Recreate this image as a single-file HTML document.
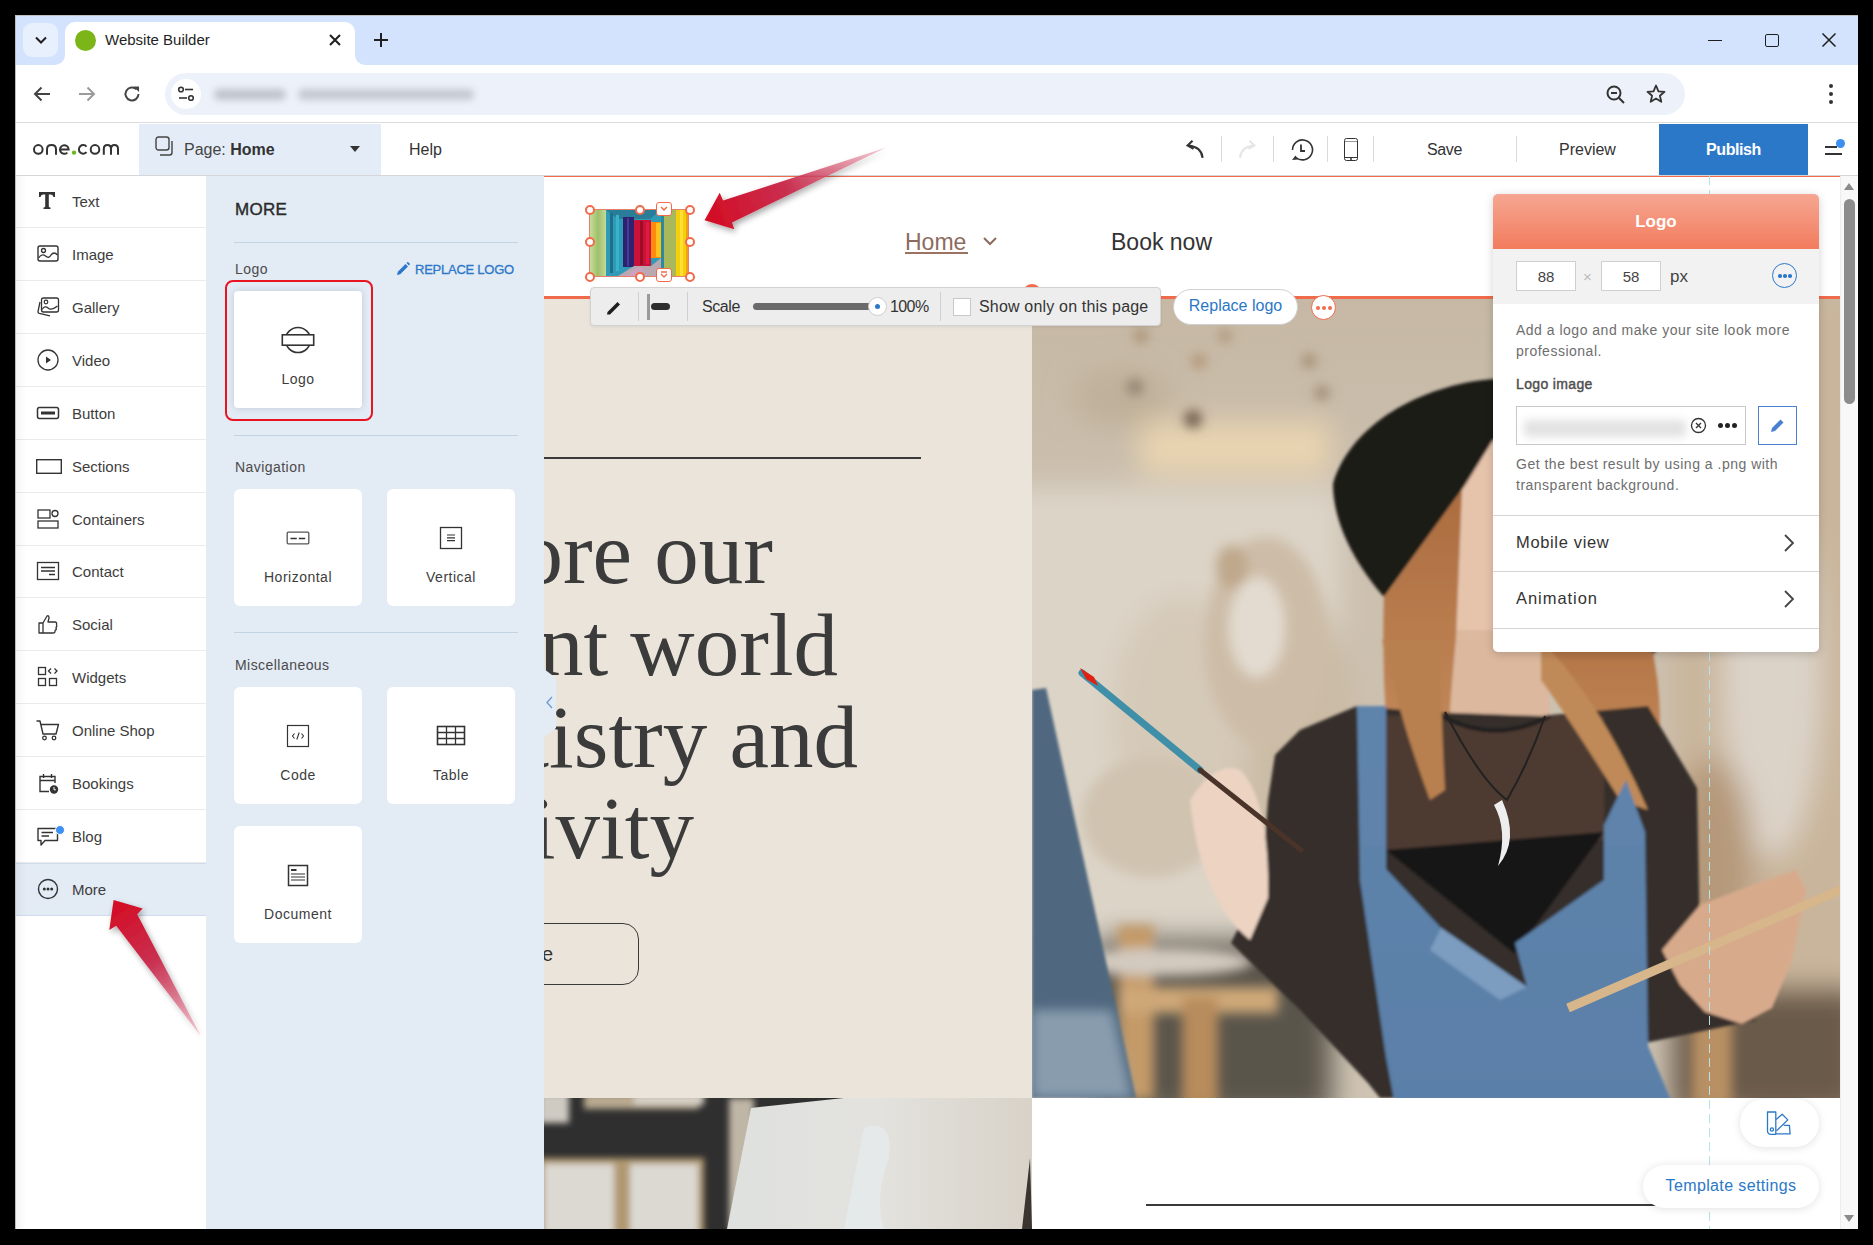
<!DOCTYPE html>
<html><head><meta charset="utf-8">
<style>
*{box-sizing:border-box;margin:0;padding:0}
html,body{width:1873px;height:1245px;overflow:hidden;background:#000;font-family:"Liberation Sans",sans-serif;color:#333}
div,span,svg{position:absolute}
.t{white-space:nowrap;line-height:1}
</style></head>
<body>
<!-- window -->
<div style="left:15px;top:15px;width:1843px;height:1214px;background:#fff;overflow:hidden;border-left:1px solid #bfbfbf;border-top:1px solid #bfbfbf"></div>
<!-- tab strip -->
<div style="left:16px;top:16px;width:1842px;height:49px;background:#d3e3fd"></div>
<!-- active tab -->
<div style="left:65px;top:22px;width:290px;height:43px;background:#fff;border-radius:10px 10px 0 0"></div>
<div style="left:55px;top:55px;width:10px;height:10px;background:#fff"></div>
<div style="left:45px;top:45px;width:20px;height:20px;background:#d3e3fd;border-radius:0 0 10px 0"></div>
<div style="left:355px;top:55px;width:10px;height:10px;background:#fff"></div>
<div style="left:355px;top:45px;width:20px;height:20px;background:#d3e3fd;border-radius:0 0 0 10px"></div>
<div style="left:23px;top:23px;width:35px;height:34px;border-radius:9px;background:#e8f0fe"></div>
<svg style="left:33px;top:33px" width="16" height="14" viewBox="0 0 16 14"><path d="M3 4.5 L8 9.5 L13 4.5" fill="none" stroke="#1f1f1f" stroke-width="2"/></svg>
<div style="left:75px;top:30px;width:21px;height:21px;border-radius:50%;background:#7cb518"></div>
<span class="t" style="left:105px;top:32px;font-size:15px;color:#1f1f1f">Website Builder</span>
<svg style="left:327px;top:32px" width="16" height="16" viewBox="0 0 16 16"><path d="M3 3 L13 13 M13 3 L3 13" stroke="#1f1f1f" stroke-width="2"/></svg>
<svg style="left:372px;top:31px" width="18" height="18" viewBox="0 0 18 18"><path d="M9 2 V16 M2 9 H16" stroke="#1f1f1f" stroke-width="2"/></svg>
<!-- window controls -->
<div style="left:1708px;top:39.5px;width:14px;height:1px;background:#1f1f1f"></div>
<div style="left:1765px;top:34px;width:14px;height:13px;border:1.5px solid #1f1f1f;border-radius:2px"></div>
<svg style="left:1821px;top:32px" width="16" height="16" viewBox="0 0 16 16"><path d="M1.5 1.5 L14.5 14.5 M14.5 1.5 L1.5 14.5" stroke="#1f1f1f" stroke-width="1.5"/></svg>
<!-- toolbar -->
<div style="left:16px;top:65px;width:1842px;height:58px;background:#fff;border-bottom:1px solid #dcdcdc"></div>
<svg style="left:32px;top:84px" width="20" height="20" viewBox="0 0 20 20"><path d="M18 10 H3 M9.5 3.5 L3 10 L9.5 16.5" fill="none" stroke="#444" stroke-width="2"/></svg>
<svg style="left:77px;top:84px" width="20" height="20" viewBox="0 0 20 20"><path d="M2 10 H17 M10.5 3.5 L17 10 L10.5 16.5" fill="none" stroke="#9a9a9a" stroke-width="2"/></svg>
<svg style="left:122px;top:84px" width="20" height="20" viewBox="0 0 20 20"><path d="M16.5 10 A6.5 6.5 0 1 1 14.6 5.4" fill="none" stroke="#444" stroke-width="2"/><path d="M11.5 2.5 H17 V8 Z" fill="#444"/></svg>
<div style="left:165px;top:73px;width:1520px;height:42px;border-radius:21px;background:#edf2fa"></div>
<div style="left:171px;top:79px;width:30px;height:30px;border-radius:50%;background:#fff"></div>
<svg style="left:176px;top:84px" width="20" height="20" viewBox="0 0 20 20"><circle cx="5" cy="5.5" r="2.3" fill="none" stroke="#333" stroke-width="1.6"/><path d="M9 5.5 H17" stroke="#333" stroke-width="1.6"/><path d="M3 14 H11" stroke="#333" stroke-width="1.6"/><circle cx="15" cy="14" r="2.3" fill="none" stroke="#333" stroke-width="1.6"/></svg>
<div style="left:214px;top:89px;width:72px;height:11px;border-radius:5px;background:#bfc3cb;filter:blur(3.5px)"></div><div style="left:298px;top:89px;width:176px;height:11px;border-radius:5px;background:#c4c8d0;filter:blur(3.5px)"></div>
<svg style="left:1605px;top:84px" width="22" height="22" viewBox="0 0 22 22"><circle cx="9" cy="9" r="6.5" fill="none" stroke="#333" stroke-width="2"/><path d="M6 9 H12 M13.8 13.8 L19 19" stroke="#333" stroke-width="2"/></svg>
<svg style="left:1645px;top:83px" width="22" height="22" viewBox="0 0 22 22"><path d="M11 2.5 L13.5 8.3 L19.5 8.8 L14.9 12.8 L16.3 18.8 L11 15.6 L5.7 18.8 L7.1 12.8 L2.5 8.8 L8.5 8.3 Z" fill="none" stroke="#333" stroke-width="1.8" stroke-linejoin="round"/></svg>
<svg style="left:1826px;top:83px" width="10" height="22" viewBox="0 0 10 22"><circle cx="5" cy="3" r="2" fill="#333"/><circle cx="5" cy="11" r="2" fill="#333"/><circle cx="5" cy="19" r="2" fill="#333"/></svg>

<!-- EDITOR -->
<div style="left:16px;top:124px;width:1842px;height:52px;background:#fff;border-bottom:1px solid #d6d6d6"></div>
<svg style="left:30px;top:140px" width="95" height="20" viewBox="0 0 95 20"><g fill="none" stroke="#333" stroke-width="2"><circle cx="8.3" cy="9.4" r="4.3"/><path d="M17 14.7 V9.3 Q17 5.1 21.5 5.1 Q26 5.1 26 9.3 V14.7"/><path d="M30 9.4 H38.6 A4.3 4.3 0 1 0 37.3 12.6"/><path d="M56.5 6.6 A4.3 4.3 0 1 0 56.5 12.2"/><circle cx="65" cy="9.4" r="4.3"/><path d="M73.8 14.7 V9 Q73.8 5.1 77.4 5.1 Q81 5.1 81 9 V14.7 M81 9 Q81 5.1 84.5 5.1 Q88 5.1 88 9 V14.7"/></g><circle cx="44" cy="12.6" r="2.2" fill="#6cb81a"/></svg>
<div style="left:139px;top:124px;width:242px;height:51px;background:#e4edf7"></div>
<svg style="left:155px;top:136px" width="20" height="21" viewBox="0 0 20 21"><rect x="1" y="1" width="13" height="13" rx="2.5" fill="none" stroke="#444" stroke-width="1.4"/><path d="M17 5 V16.5 Q17 19 14.5 19 H5" fill="none" stroke="#444" stroke-width="1.4"/></svg>
<span class="t" style="left:184px;top:142px;font-size:16px;color:#444">Page: <b style="color:#333;font-weight:bold">Home</b></span>
<svg style="left:349px;top:145px" width="12" height="8" viewBox="0 0 12 8"><path d="M1 1 H11 L6 7 Z" fill="#333"/></svg>
<span class="t" style="left:409px;top:142px;font-size:16px;color:#333">Help</span>
<!-- undo/redo etc -->
<svg style="left:1184px;top:139px" width="22" height="22" viewBox="0 0 22 22"><path d="M18.6 18.8 Q17.5 8 4.5 6.5" fill="none" stroke="#333" stroke-width="2.1"/><path d="M8.5 1.8 L3.6 6.6 L9.6 9.8" fill="none" stroke="#333" stroke-width="2.1"/></svg>
<div style="left:1221px;top:136px;width:1px;height:26px;background:#d9d9d9"></div>
<svg style="left:1236px;top:139px" width="22" height="22" viewBox="0 0 22 22"><path d="M4 18.8 Q5 8 17.5 6.5" fill="none" stroke="#e6e6e6" stroke-width="2.1"/><path d="M13.5 1.8 L18.4 6.6 L12.4 9.8" fill="none" stroke="#e6e6e6" stroke-width="2.1"/></svg>
<div style="left:1273px;top:136px;width:1px;height:26px;background:#d9d9d9"></div>
<svg style="left:1288px;top:138px" width="26" height="24" viewBox="0 0 26 24"><path d="M4.5 12 A10 10 0 1 1 8 19.5" fill="none" stroke="#333" stroke-width="1.6"/><path d="M13 6.5 V13 H17" fill="none" stroke="#333" stroke-width="1.8"/><path d="M4 22 L7.5 17.5 L10 21.5 Z" fill="#333"/></svg>
<div style="left:1327px;top:136px;width:1px;height:26px;background:#d9d9d9"></div>
<div style="left:1344px;top:138px;width:14px;height:23px;border:1.5px solid #333;border-radius:2.5px"></div>
<div style="left:1345px;top:140.5px;width:12px;height:1.5px;background:#999"></div>
<div style="left:1345px;top:157px;width:12px;height:1px;background:#333"></div>
<div style="left:1350px;top:158px;width:2px;height:2px;border-radius:50%;background:#333"></div>
<div style="left:1373px;top:136px;width:1px;height:26px;background:#d9d9d9"></div>
<span class="t" style="left:1427px;top:142px;font-size:16px;color:#333;letter-spacing:-0.35px">Save</span>
<div style="left:1516px;top:136px;width:1px;height:26px;background:#d9d9d9"></div>
<span class="t" style="left:1559px;top:142px;font-size:16px;color:#333">Preview</span>
<div style="left:1659px;top:124px;width:149px;height:51px;background:#2b78c9"></div>
<span class="t" style="left:1706px;top:142px;font-size:16px;color:#fff;font-weight:bold;letter-spacing:-0.4px">Publish</span>
<div style="left:1825px;top:146px;width:12px;height:2px;background:#333"></div>
<div style="left:1825px;top:153px;width:17px;height:2px;background:#333"></div>
<div style="left:1836px;top:139px;width:9px;height:9px;border-radius:50%;background:#3d8ff0"></div>
<!-- CANVAS -->
<div style="left:544px;top:176px;width:1296px;height:1053px;background:#fff;overflow:hidden">
 <div style="left:0;top:0;width:1296px;height:1px;background:#f06b4b"></div>
 <div style="left:0;top:121px;width:488px;height:801px;background:#ebe4da"></div>
 <div style="left:0;top:281px;width:377px;height:2px;background:#3a3a3a"></div>
 <span class="t" style="right:1067px;top:333px;font-family:'Liberation Serif',serif;font-size:89px;color:#3b3b3b">Explore our</span>
 <span class="t" style="right:1002px;top:425px;font-family:'Liberation Serif',serif;font-size:89px;color:#3b3b3b">vibrant world</span>
 <span class="t" style="right:982px;top:517px;font-family:'Liberation Serif',serif;font-size:89px;color:#3b3b3b">of artistry and</span>
 <span class="t" style="right:1146px;top:608px;font-family:'Liberation Serif',serif;font-size:89px;color:#3b3b3b">creativity</span>
 <div style="left:-120px;top:747px;width:215px;height:62px;border:1px solid #3a3a3a;border-radius:16px"></div>
 <span class="t" style="right:1287px;top:768px;font-size:20px;color:#333">Explore</span>
 <div id="photo" style="left:488px;top:121px;width:808px;height:801px;background:#c9bba7;overflow:hidden"><svg style="left:0;top:0" width="808" height="801" viewBox="0 0 808 801">
<defs>
<filter id="b6" x="-20%" y="-20%" width="140%" height="140%"><feGaussianBlur stdDeviation="6"/></filter>
<filter id="b2" x="-10%" y="-10%" width="120%" height="120%"><feGaussianBlur stdDeviation="1.5"/></filter>
<filter id="b14" x="-30%" y="-30%" width="160%" height="160%"><feGaussianBlur stdDeviation="14"/></filter>
<linearGradient id="bgtop" x1="0" y1="0" x2="0" y2="1"><stop offset="0" stop-color="#c6b8a4"/><stop offset="0.25" stop-color="#cbbfae"/><stop offset="1" stop-color="#cfc4b4"/></linearGradient>
<linearGradient id="denim" x1="0" y1="0" x2="0" y2="1"><stop offset="0" stop-color="#5f84ab"/><stop offset="1" stop-color="#5a7fa8"/></linearGradient>
<linearGradient id="hairg" x1="0" y1="0" x2="0" y2="1"><stop offset="0" stop-color="#a8673a"/><stop offset="1" stop-color="#c89060"/></linearGradient>
</defs>
<rect width="808" height="801" fill="url(#bgtop)"/>
<g filter="url(#b14)">
 <rect x="-30" y="190" width="340" height="460" fill="#dcd4c7"/>
 <rect x="108" y="125" width="190" height="52" fill="#e9d4b0"/>
 <ellipse cx="270" cy="470" rx="60" ry="160" fill="#cbbba5"/>
 <ellipse cx="150" cy="420" rx="70" ry="120" fill="#d5c9b8"/>
 <rect x="640" y="0" width="190" height="801" fill="#c9b59b"/>
 <ellipse cx="740" cy="380" rx="50" ry="180" fill="#dcd3c8"/>
 <ellipse cx="680" cy="560" rx="40" ry="100" fill="#b5997a"/>
 <rect x="60" y="640" width="240" height="180" fill="#5a544c"/>
 <rect x="640" y="690" width="190" height="130" fill="#6b5a48"/>
 <ellipse cx="90" cy="100" rx="50" ry="30" fill="#bfb09a"/>
</g>
<g filter="url(#b6)">
 <ellipse cx="234" cy="345" rx="62" ry="105" fill="#cdbda8"/>
 <ellipse cx="225" cy="330" rx="28" ry="50" fill="#e3dbd0"/>
 <ellipse cx="200" cy="270" rx="16" ry="22" fill="#bfa88c"/>
 <ellipse cx="120" cy="520" rx="70" ry="60" fill="#d0c3b0"/>
 <circle cx="109" cy="39" r="7" fill="#a88e70"/>
 <circle cx="167" cy="64" r="7" fill="#b09070"/>
 <circle cx="193" cy="39" r="6" fill="#a88e70"/>
 <circle cx="277" cy="64" r="7" fill="#a08a70"/>
 <circle cx="103" cy="90" r="8" fill="#8f8070"/>
 <circle cx="290" cy="96" r="7" fill="#9a8570"/>
 <circle cx="161" cy="122" r="9" fill="#6e5a48"/>
 <rect x="86" y="628" width="36" height="175" fill="#c49a68"/>
 <rect x="86" y="690" width="160" height="26" fill="#cfa878"/>
 <rect x="150" y="700" width="36" height="110" fill="#b88c5c"/>
 <ellipse cx="130" cy="665" rx="90" ry="14" fill="#d3cbc0"/>
 <rect x="660" y="700" width="40" height="110" fill="#b89064"/>
</g>
<!-- easel -->
<polygon points="0,393 14,391 104,801 0,801" fill="#4f677f" filter="url(#b2)"/>
<polygon points="0,713 80,713 100,801 0,801" fill="#93a6b6" filter="url(#b6)" opacity="0.85"/>
<g filter="url(#b2)">
<!-- hat -->
<path d="M301,187 C318,128 388,88 461,82 L628,75 L678,263 L618,363 L528,263 L461,150 L352,300 C320,263 301,223 301,187 Z" fill="#1c1a19"/>
<!-- face -->
<polygon points="461,143 528,173 548,303 513,353 461,353 424,341 430,193" fill="#e6c4ac"/>
<!-- neck -->
<path d="M409,333 L513,333 L518,423 Q463,451 409,423 Z" fill="#dcb89e"/>
<!-- hair -->
<path d="M461,150 L352,300 Q350,363 354,423 Q363,473 380,508 L413,503 Q416,423 424,341 L430,193 Z" fill="url(#hairg)"/>
<path d="M528,263 L618,343 Q638,423 618,513 L568,493 Q528,403 509,343 Z" fill="url(#hairg)"/>
<!-- sheer top -->
<polygon points="243,458 268,433 325,409 398,415 509,419 616,409 665,491 668,646 724,723 613,746 616,801 348,801 336,786 268,713 199,646 230,583 236,503" fill="#342e2b"/>
<path d="M354,419 L409,419 Q463,448 518,419 L572,419 L572,543 L354,553 Z" fill="#4d3b33"/><path d="M409,419 Q463,448 518,419" fill="none" stroke="#1c1a1a" stroke-width="4"/>
<polygon points="354,553 572,535 483,657" fill="#141414"/>
<!-- hair over chest -->
<path d="M350,343 Q368,423 398,503 L413,493 Q408,403 410,343 Z" fill="#b98050"/>
<path d="M509,343 Q568,403 616,513 L588,503 Q538,423 509,383 Z" fill="#c08a58"/>
<!-- denim -->
<polygon points="325,409 354,409 354,572 409,631 495,690 483,646 572,583 572,528 594,483 613,535 616,749 639,803 362,803 354,760 328,583" fill="url(#denim)"/>
<polygon points="409,631 495,690 468,703 398,653" fill="#7b9cc0"/>
<!-- hands -->
<path d="M158,503 Q183,463 208,473 Q238,503 236,601 L218,643 Q168,603 158,503 Z" fill="#ecd3c2"/>
<polygon points="630,653 668,608 728,585 764,573 774,593 760,663 740,711 710,727 673,715 648,688" fill="#d8aa8c"/>
</g>
<!-- brush -->
<line x1="50" y1="376" x2="168" y2="473" stroke="#3f8fa8" stroke-width="7" stroke-linecap="round"/>
<line x1="168" y1="473" x2="269" y2="553" stroke="#4a3328" stroke-width="5" stroke-linecap="round"/>
<polygon points="48,371 62,380 66,389 54,382" fill="#e02010"/>
<!-- palette -->
<line x1="536" y1="711" x2="813" y2="591" stroke="#d6b68a" stroke-width="9"/>
<!-- necklace -->
<path d="M413,415 Q448,483 475,503 Q498,463 513,419" fill="none" stroke="#222" stroke-width="2"/>
<path d="M470,503 Q488,543 466,569 Q476,533 462,508 Z" fill="#eee"/>
</svg></div>
 <div id="photo2" style="left:0;top:922px;width:488px;height:131px;background:#9a958c;overflow:hidden"><svg style="left:0;top:0" width="488" height="131" viewBox="0 0 488 131">
<defs><filter id="pb3"><feGaussianBlur stdDeviation="3"/></filter><linearGradient id="cv" x1="0" y1="0" x2="1" y2="0"><stop offset="0" stop-color="#dfe1df"/><stop offset="0.5" stop-color="#e3e2de"/><stop offset="1" stop-color="#d8d2c8"/></linearGradient></defs>
<rect width="488" height="131" fill="#2f2f2f"/>
<g filter="url(#pb3)">
<rect x="-5" y="-5" width="30" height="30" fill="#cfcac2"/>
<rect x="40" y="-5" width="115" height="16" fill="#b8a98f"/>
<rect x="90" y="-5" width="70" height="12" fill="#d5d0c6"/>
<rect x="-5" y="60" width="165" height="80" fill="#b09870"/>
<rect x="0" y="66" width="70" height="70" fill="#dcd9d3"/>
<rect x="86" y="66" width="68" height="70" fill="#dcd9d3"/>
<rect x="185" y="0" width="25" height="131" fill="#bfb6a6"/>
</g>
<polygon points="207,10 300,0 488,0 488,131 183,131" fill="url(#cv)"/>
<path d="M320 30 Q350 20 345 60 Q330 100 340 131 L300 131 Q310 80 320 30 Z" fill="#e6ecee" opacity="0.7"/>
<path d="M486 60 L478 131 L488 131 Z" fill="#3a3530"/>
</svg></div>
 <div style="left:602px;top:1028px;width:520px;height:2px;background:#3a3a3a"></div>
 <div style="left:0;top:120px;width:1296px;height:3px;background:#f06b4b"></div>
 <!-- nav -->
 <span class="t" style="left:361px;top:55px;font-size:23px;color:#8c6c5e">Home</span>
 <div style="left:361px;top:76px;width:63px;height:2px;background:#9c7362"></div>
 <svg style="left:438px;top:59px" width="16" height="12" viewBox="0 0 16 12"><path d="M2 3 L8 9 L14 3" fill="none" stroke="#8c6c5e" stroke-width="2"/></svg>
 <span class="t" style="left:567px;top:55px;font-size:23px;color:#333">Book now</span>
 <!-- logo -->
 <svg style="left:46px;top:34px" width="98" height="66" viewBox="0 0 98 66" preserveAspectRatio="none">
<defs><linearGradient id="lg1" x1="0" x2="1"><stop offset="0" stop-color="#c9dc9a"/><stop offset="0.5" stop-color="#9fbf6a"/><stop offset="1" stop-color="#c6d99a"/></linearGradient></defs>
<rect width="98" height="66" fill="#a9bf5e"/>
<rect x="0" y="0" width="16" height="66" fill="url(#lg1)"/>
<rect x="16" y="0" width="55" height="66" fill="#2f9bb6"/>
<path d="M16 0 H71 L60 9 H28 Z" fill="#2a7d98"/>
<rect x="20" y="3" width="3" height="60" fill="#1f6f8a"/>
<rect x="26" y="5" width="3" height="56" fill="#38b3cc"/>
<rect x="33" y="7" width="11" height="50" fill="#2c2370"/>
<rect x="37" y="8" width="2" height="48" fill="#4a3a95"/>
<rect x="44" y="10" width="17" height="46" fill="#c8123a"/>
<rect x="50" y="11" width="3" height="44" fill="#9c0d25"/>
<rect x="56" y="12" width="3" height="42" fill="#e01a40"/>
<rect x="61" y="12" width="10" height="36" fill="#ff8a10"/>
<rect x="66" y="13" width="5" height="34" fill="#ffc21a"/>
<path d="M28 66 L44 56 H61 L71 48 V66 Z" fill="#b9a8b0"/>
<path d="M36 66 L46 58 H54 L50 66 Z" fill="#d7a0c0" opacity="0.7"/>
<rect x="71" y="0" width="3" height="66" fill="#2a8aa0"/>
<rect x="74" y="0" width="12" height="66" fill="#a8b85a"/>
<rect x="86" y="0" width="10" height="66" fill="#f4cf10"/>
<rect x="90" y="0" width="3" height="66" fill="#ffe030"/>
<rect x="96" y="0" width="2" height="66" fill="#f0a010"/>
</svg>
<div style="left:45px;top:33px;width:100px;height:68px;border:1.5px solid #e7806a"></div>
</div>
<!-- SIDEBAR -->
<div style="left:16px;top:176px;width:190px;height:1053px;background:#fff"></div>
<div style="left:16px;top:227.0px;width:190px;height:1px;background:#ebebeb"></div>
<svg style="left:36px;top:189.0px" width="26" height="24" viewBox="0 0 26 24"><path d="M3 3 H19 V8 H17.5 Q17 5.5 15 5.5 H12.8 V17.5 Q12.8 18.6 14.5 18.6 V20 H7.5 V18.6 Q9.2 18.6 9.2 17.5 V5.5 H7 Q5 5.5 4.5 8 H3 Z" fill="#333"/></svg>
<span class="t" style="left:72px;top:194.0px;font-size:15px;color:#3d3d3d">Text</span>
<div style="left:16px;top:279.9px;width:190px;height:1px;background:#ebebeb"></div>
<svg style="left:36px;top:241.9px" width="26" height="24" viewBox="0 0 26 24"><rect x="2" y="4" width="20" height="15" rx="2" fill="none" stroke="#333" stroke-width="1.4"/><circle cx="7.5" cy="8.5" r="2" fill="none" stroke="#333" stroke-width="1.3"/><path d="M2.5 16 Q6 11 9.5 14 T15 13 Q18 9 21.5 13" fill="none" stroke="#333" stroke-width="1.3"/></svg>
<span class="t" style="left:72px;top:246.9px;font-size:15px;color:#3d3d3d">Image</span>
<div style="left:16px;top:332.8px;width:190px;height:1px;background:#ebebeb"></div>
<svg style="left:36px;top:294.8px" width="26" height="24" viewBox="0 0 26 24"><path d="M4 7 L2 16.5 Q1.8 18 3.3 18.4 L14 20.8" fill="none" stroke="#333" stroke-width="1.3"/><rect x="5.5" y="3" width="17" height="14" rx="2" fill="none" stroke="#333" stroke-width="1.3"/><circle cx="10" cy="7" r="1.8" fill="none" stroke="#333" stroke-width="1.2"/><path d="M6 14.5 Q9 10 12 13 T21.5 11" fill="none" stroke="#333" stroke-width="1.2"/></svg>
<span class="t" style="left:72px;top:299.8px;font-size:15px;color:#3d3d3d">Gallery</span>
<div style="left:16px;top:385.8px;width:190px;height:1px;background:#ebebeb"></div>
<svg style="left:36px;top:347.8px" width="26" height="24" viewBox="0 0 26 24"><circle cx="12" cy="12" r="10" fill="none" stroke="#333" stroke-width="1.3"/><path d="M10 8.5 L15 12 L10 15.5 Z" fill="#333"/></svg>
<span class="t" style="left:72px;top:352.8px;font-size:15px;color:#3d3d3d">Video</span>
<div style="left:16px;top:438.7px;width:190px;height:1px;background:#ebebeb"></div>
<svg style="left:36px;top:400.7px" width="26" height="24" viewBox="0 0 26 24"><rect x="1.5" y="6.5" width="21" height="11" rx="2" fill="none" stroke="#333" stroke-width="1.5"/><rect x="5" y="10.5" width="14" height="3" fill="#333"/></svg>
<span class="t" style="left:72px;top:405.7px;font-size:15px;color:#3d3d3d">Button</span>
<div style="left:16px;top:491.6px;width:190px;height:1px;background:#ebebeb"></div>
<svg style="left:36px;top:453.6px" width="26" height="24" viewBox="0 0 26 24"><rect x="0.7" y="5.7" width="24.6" height="13.6" fill="none" stroke="#333" stroke-width="1.4"/></svg>
<span class="t" style="left:72px;top:458.6px;font-size:15px;color:#3d3d3d">Sections</span>
<div style="left:16px;top:544.5px;width:190px;height:1px;background:#ebebeb"></div>
<svg style="left:36px;top:506.5px" width="26" height="24" viewBox="0 0 26 24"><rect x="2" y="3" width="12" height="8" fill="none" stroke="#333" stroke-width="1.3"/><circle cx="19" cy="6.5" r="3" fill="none" stroke="#333" stroke-width="1.3"/><rect x="2" y="14" width="20" height="7" fill="none" stroke="#333" stroke-width="1.3"/></svg>
<span class="t" style="left:72px;top:511.5px;font-size:15px;color:#3d3d3d">Containers</span>
<div style="left:16px;top:597.4px;width:190px;height:1px;background:#ebebeb"></div>
<svg style="left:36px;top:559.4px" width="26" height="24" viewBox="0 0 26 24"><rect x="1.5" y="3.5" width="21" height="17" fill="none" stroke="#333" stroke-width="1.3"/><path d="M5 8.5 H19 M5 12 H19 M13 15.5 H19" stroke="#333" stroke-width="1.3"/></svg>
<span class="t" style="left:72px;top:564.4px;font-size:15px;color:#3d3d3d">Contact</span>
<div style="left:16px;top:650.4px;width:190px;height:1px;background:#ebebeb"></div>
<svg style="left:36px;top:612.4px" width="26" height="24" viewBox="0 0 26 24"><path d="M3 11 H7 V21 H3 Z M7 11 L11 4 Q13 3 13 6 L12 10 H19 Q21 10 20.5 12.5 Q21.5 14 20 15.5 Q21 17.5 19 18.5 Q19.5 21 17 21 H7" fill="none" stroke="#333" stroke-width="1.3" stroke-linejoin="round"/></svg>
<span class="t" style="left:72px;top:617.4px;font-size:15px;color:#3d3d3d">Social</span>
<div style="left:16px;top:703.3px;width:190px;height:1px;background:#ebebeb"></div>
<svg style="left:36px;top:665.3px" width="26" height="24" viewBox="0 0 26 24"><rect x="2.5" y="2.5" width="7" height="7" fill="none" stroke="#333" stroke-width="1.3"/><path d="M15 3.5 L12.5 6 L15 8.5 M18.5 3.5 L21 6 L18.5 8.5" fill="none" stroke="#333" stroke-width="1.3"/><rect x="2.5" y="13.5" width="7" height="7" fill="none" stroke="#333" stroke-width="1.3"/><rect x="13.5" y="13.5" width="7" height="7" fill="none" stroke="#333" stroke-width="1.3"/></svg>
<span class="t" style="left:72px;top:670.3px;font-size:15px;color:#3d3d3d">Widgets</span>
<div style="left:16px;top:756.2px;width:190px;height:1px;background:#ebebeb"></div>
<svg style="left:36px;top:718.2px" width="26" height="24" viewBox="0 0 26 24"><path d="M0.5 3 H4 L7 16 H20 L22.5 6.5 H5" fill="none" stroke="#333" stroke-width="1.4" stroke-linejoin="round"/><circle cx="8.5" cy="20" r="1.8" fill="none" stroke="#333" stroke-width="1.3"/><circle cx="18" cy="20" r="1.8" fill="none" stroke="#333" stroke-width="1.3"/></svg>
<span class="t" style="left:72px;top:723.2px;font-size:15px;color:#3d3d3d">Online Shop</span>
<div style="left:16px;top:809.1px;width:190px;height:1px;background:#ebebeb"></div>
<svg style="left:36px;top:771.1px" width="26" height="24" viewBox="0 0 26 24"><path d="M13 20.5 H4 V5.5 H19 V12" fill="none" stroke="#333" stroke-width="1.4"/><path d="M4 9.5 H19 M7.5 3 V7 M15.5 3 V7" stroke="#333" stroke-width="1.4"/><circle cx="18" cy="18.5" r="4.2" fill="#333"/><path d="M18 16 V18.8 H19.8" fill="none" stroke="#fff" stroke-width="1"/></svg>
<span class="t" style="left:72px;top:776.1px;font-size:15px;color:#3d3d3d">Bookings</span>
<div style="left:16px;top:862.0px;width:190px;height:1px;background:#ebebeb"></div>
<svg style="left:36px;top:824.0px" width="26" height="24" viewBox="0 0 26 24"><path d="M2 4.5 H21.5 V16.5 H9 L5 21 V16.5 H2 Z" fill="none" stroke="#333" stroke-width="1.4" stroke-linejoin="round"/><path d="M5.5 8.5 H17 M5.5 12 H13" stroke="#333" stroke-width="1.3"/></svg>
<span class="t" style="left:72px;top:829.0px;font-size:15px;color:#3d3d3d">Blog</span>
<div style="left:16px;top:863.0px;width:190px;height:53px;background:#e3ebf5;border-top:1px solid #cfdcec;border-bottom:1px solid #cfdcec"></div>
<svg style="left:36px;top:877.0px" width="26" height="24" viewBox="0 0 26 24"><circle cx="12" cy="12" r="9.5" fill="none" stroke="#333" stroke-width="1.4"/><circle cx="8.3" cy="12" r="1.5" fill="#333"/><circle cx="12" cy="12" r="1.5" fill="#333"/><circle cx="15.7" cy="12" r="1.5" fill="#333"/></svg>
<span class="t" style="left:72px;top:882.0px;font-size:15px;color:#3d3d3d">More</span>
<div style="left:55px;top:825px;width:10px;height:10px;border-radius:50%;background:#3d8ff0;border:1px solid #fff"></div>
<div style="left:16px;top:176px;width:10px;height:1053px;background:linear-gradient(to right,rgba(0,0,0,0.045),rgba(0,0,0,0))"></div>
<!-- PANEL -->
<div style="left:206px;top:176px;width:338px;height:1053px;background:#e3ebf5"></div>
<span class="t" style="left:235px;top:201px;font-size:17px;color:#2a2a2a;letter-spacing:0.3px;-webkit-text-stroke:0.4px #2a2a2a">MORE</span>
<div style="left:234px;top:242px;width:284px;height:1px;background:#c3d3e6"></div>
<span class="t" style="left:235px;top:262px;font-size:14px;color:#4a4a4a;letter-spacing:0.45px">Logo</span>
<svg style="left:396px;top:262px" width="14" height="14" viewBox="0 0 14 14"><path d="M1 13 L1.8 9.8 L9.5 2 L12 4.5 L4.2 12.2 Z M10.5 1 L11.3 0.3 Q12 -0.2 12.6 0.4 L13.6 1.4 Q14.2 2 13.6 2.7 L12.9 3.4 Z" fill="#2b78c9"/></svg>
<span class="t" style="left:415px;top:263px;font-size:13px;color:#2b78c9;letter-spacing:-0.25px;-webkit-text-stroke:0.3px #2b78c9">REPLACE LOGO</span>
<div style="left:225px;top:280px;width:148px;height:141px;border:2.5px solid #e8141f;border-radius:8px"></div>
<div style="left:234px;top:291px;width:128px;height:117px;background:#fff;border-radius:4px;box-shadow:0 0 6px rgba(80,100,130,0.25)"></div>
<svg style="left:280px;top:324px" width="36" height="32" viewBox="0 0 36 32"><circle cx="18" cy="16" r="12.5" fill="none" stroke="#333" stroke-width="1.6"/><rect x="2.3" y="10.8" width="31.4" height="10.4" fill="#fff" stroke="#333" stroke-width="1.6"/></svg>
<span class="t" style="left:234px;top:372px;width:128px;text-align:center;font-size:14px;color:#3d3d3d;letter-spacing:0.5px">Logo</span>
<div style="left:234px;top:435px;width:284px;height:1px;background:#c3d3e6"></div>
<span class="t" style="left:235px;top:460px;font-size:14px;color:#4a4a4a;letter-spacing:0.45px">Navigation</span>
<div style="left:234px;top:489px;width:128px;height:117px;background:#fff;border-radius:6px"></div><svg style="left:268px;top:519px" width="60" height="40" viewBox="0 0 60 40"><rect x="19.2" y="13.2" width="21.6" height="11.6" rx="1" fill="none" stroke="#555" stroke-width="1.3"/><path d="M22.5 19.5 H28.8 M30.8 19.5 H37.2" stroke="#333" stroke-width="1.3"/></svg><span class="t" style="left:234px;top:570px;width:128px;text-align:center;font-size:14px;color:#3d3d3d;letter-spacing:0.5px">Horizontal</span>
<div style="left:387px;top:489px;width:128px;height:117px;background:#fff;border-radius:6px"></div><svg style="left:421px;top:519px" width="60" height="40" viewBox="0 0 60 40"><rect x="19.5" y="8.5" width="21" height="21" fill="none" stroke="#333" stroke-width="1.3"/><path d="M26 16 H34 M26 18.8 H34 M26 21.6 H34" stroke="#333" stroke-width="1.2"/></svg><span class="t" style="left:387px;top:570px;width:128px;text-align:center;font-size:14px;color:#3d3d3d;letter-spacing:0.5px">Vertical</span>
<div style="left:234px;top:632px;width:284px;height:1px;background:#c3d3e6"></div>
<span class="t" style="left:235px;top:658px;font-size:14px;color:#4a4a4a;letter-spacing:0.45px">Miscellaneous</span>
<div style="left:234px;top:687px;width:128px;height:117px;background:#fff;border-radius:6px"></div><svg style="left:268px;top:717px" width="60" height="40" viewBox="0 0 60 40"><rect x="19.5" y="8.5" width="21" height="21" fill="none" stroke="#333" stroke-width="1.2"/><path d="M26.5 16.5 L24.5 19 L26.5 21.5 M33.5 16.5 L35.5 19 L33.5 21.5 M31.2 15.5 L28.8 22.5" fill="none" stroke="#333" stroke-width="1.1"/></svg><span class="t" style="left:234px;top:768px;width:128px;text-align:center;font-size:14px;color:#3d3d3d;letter-spacing:0.5px">Code</span>
<div style="left:387px;top:687px;width:128px;height:117px;background:#fff;border-radius:6px"></div><svg style="left:421px;top:717px" width="60" height="40" viewBox="0 0 60 40"><rect x="16.5" y="9.5" width="27" height="18" fill="none" stroke="#333" stroke-width="1.6"/><path d="M16.5 15.5 H43.5 M16.5 21.5 H43.5 M25.5 9.5 V27.5 M34.5 9.5 V27.5" stroke="#333" stroke-width="1.3"/></svg><span class="t" style="left:387px;top:768px;width:128px;text-align:center;font-size:14px;color:#3d3d3d;letter-spacing:0.5px">Table</span>
<div style="left:234px;top:826px;width:128px;height:117px;background:#fff;border-radius:6px"></div><svg style="left:268px;top:856px" width="60" height="40" viewBox="0 0 60 40"><rect x="20.5" y="9.5" width="19" height="20" fill="none" stroke="#333" stroke-width="1.5"/><rect x="23" y="13" width="5.5" height="2" fill="#333"/><path d="M23 18 H37 M23 21 H37 M23 24 H37" stroke="#333" stroke-width="1"/></svg><span class="t" style="left:234px;top:907px;width:128px;text-align:center;font-size:14px;color:#3d3d3d;letter-spacing:0.5px">Document</span>
<!-- OVERLAYS -->
<!-- logo handles -->
<div style="left:584.5px;top:205px;width:10px;height:10px;border-radius:50%;background:#fff;border:2px solid #f06b4b"></div>
<div style="left:634.5px;top:205px;width:10px;height:10px;border-radius:50%;background:#fff;border:2px solid #f06b4b"></div>
<div style="left:685px;top:205px;width:10px;height:10px;border-radius:50%;background:#fff;border:2px solid #f06b4b"></div>
<div style="left:584.5px;top:237px;width:10px;height:10px;border-radius:50%;background:#fff;border:2px solid #f06b4b"></div>
<div style="left:685px;top:237px;width:10px;height:10px;border-radius:50%;background:#fff;border:2px solid #f06b4b"></div>
<div style="left:584.5px;top:271.5px;width:10px;height:10px;border-radius:50%;background:#fff;border:2px solid #f06b4b"></div>
<div style="left:634.5px;top:271.5px;width:10px;height:10px;border-radius:50%;background:#fff;border:2px solid #f06b4b"></div>
<div style="left:685px;top:271.5px;width:10px;height:10px;border-radius:50%;background:#fff;border:2px solid #f06b4b"></div>
<div style="left:656px;top:202px;width:16px;height:14px;border-radius:3px;background:#fff;border:1.5px solid #f06b4b"></div>
<svg style="left:659px;top:205px" width="10" height="8" viewBox="0 0 10 8"><path d="M2 2 L5 5 L8 2" fill="none" stroke="#f06b4b" stroke-width="1.5"/></svg>
<div style="left:656px;top:268px;width:16px;height:14px;border-radius:3px;background:#fff;border:1.5px solid #f06b4b"></div>
<svg style="left:659px;top:271px" width="10" height="8" viewBox="0 0 10 8"><path d="M2 1 H8 M2 3 L5 6 L8 3" fill="none" stroke="#f06b4b" stroke-width="1.3"/></svg>
<!-- half circle handle -->
<div style="left:1022px;top:284px;width:20px;height:20px;border-radius:50%;background:#f06b4b"></div>
<!-- logo toolbar -->
<div style="left:590px;top:287px;width:571px;height:39px;background:#ededed;border:1px solid #d2d2d2;border-radius:4px;box-shadow:0 1px 3px rgba(0,0,0,0.08)"></div>
<svg style="left:606px;top:299px" width="17" height="16" viewBox="0 0 17 16"><path d="M1.5 13 L11.5 3 L14 5.5 L4 15.5 L1 15.5 Z" fill="#1e1e1e"/></svg>
<div style="left:638px;top:292px;width:1px;height:29px;background:#d0d0d0"></div>
<div style="left:647px;top:294px;width:2.5px;height:26px;background:#9a9a9a"></div>
<div style="left:651px;top:303px;width:19px;height:7px;border-radius:4px;background:#2e2e2e"></div>
<div style="left:687px;top:292px;width:1px;height:29px;background:#d0d0d0"></div>
<span class="t" style="left:702px;top:299px;font-size:16px;color:#333;letter-spacing:-0.4px">Scale</span>
<div style="left:753px;top:303px;width:122px;height:7px;border-radius:4px;background:#6a6a6a"></div>
<div style="left:868px;top:297px;width:19px;height:19px;border-radius:50%;background:#fff;border:1px solid #cfcfcf"></div>
<div style="left:875px;top:304px;width:5px;height:5px;border-radius:50%;background:#2b78c9"></div>
<span class="t" style="left:890px;top:299px;font-size:16px;color:#333;letter-spacing:-0.6px">100%</span>
<div style="left:940px;top:292px;width:1px;height:29px;background:#d0d0d0"></div>
<div style="left:953px;top:298px;width:18px;height:18px;background:#fff;border:1px solid #c8c8c8"></div>
<span class="t" style="left:979px;top:299px;font-size:16px;color:#333;letter-spacing:0.18px">Show only on this page</span>
<div style="left:1173px;top:289px;width:125px;height:36px;border-radius:18px;background:#fff;border:1px solid #d0d0d0"></div>
<span class="t" style="left:1173px;top:298px;width:125px;text-align:center;font-size:16px;color:#2b78c9">Replace logo</span>
<div style="left:1311px;top:295px;width:25px;height:25px;border-radius:50%;background:#fff;border:1.5px solid #f06b4b"></div>
<div style="left:1316px;top:306px;width:4px;height:4px;border-radius:50%;background:#f06b4b"></div>
<div style="left:1322px;top:306px;width:4px;height:4px;border-radius:50%;background:#f06b4b"></div>
<div style="left:1328px;top:306px;width:4px;height:4px;border-radius:50%;background:#f06b4b"></div>
<!-- hero tab -->
<svg style="left:544px;top:669px" width="13" height="68" viewBox="0 0 13 68"><path d="M0 0 L12 9 V59 L0 68 Z" fill="#e3ebf5"/><path d="M8 28 L3 33.5 L8 39" fill="none" stroke="#6b9bd2" stroke-width="1.3"/></svg>
<!-- dashed guide -->
<div style="left:1709px;top:176px;width:1px;height:1053px;background:repeating-linear-gradient(to bottom,#b5e3ea 0 9px,transparent 9px 14px)"></div>
<!-- scrollbar -->
<div style="left:1840px;top:176px;width:18px;height:1053px;background:#f8f8f8;border-left:1px solid #ececec"></div>
<svg style="left:1843px;top:181px" width="12" height="10" viewBox="0 0 12 10"><path d="M1 9 L6 2 L11 9 Z" fill="#8a8a8a"/></svg>
<div style="left:1844px;top:199px;width:11px;height:205px;border-radius:6px;background:#8c8c8c"></div>
<svg style="left:1843px;top:1214px" width="12" height="10" viewBox="0 0 12 10"><path d="M1 1 L6 8 L11 1 Z" fill="#8a8a8a"/></svg>
<!-- floating buttons -->
<div style="left:1740px;top:1099px;width:79px;height:48px;border-radius:24px;background:#fff;box-shadow:0 1px 8px rgba(0,0,0,0.12)"></div>
<svg style="left:1760px;top:1105px" width="40" height="36" viewBox="0 0 40 36"><g fill="none" stroke="#2b78c9" stroke-width="1.3" stroke-linejoin="round"><path d="M7.5 7 H15.8 V29.3 H11 Q7.5 29.3 7.5 25.8 Z"/><circle cx="11.9" cy="24.5" r="1.6"/><path d="M16.2 14.5 L22.2 9.3 L27.8 14.9 L16.5 25.9"/><path d="M23.6 20.3 H29.4 L30.1 28.9 H15.8"/></g></svg>
<div style="left:1643px;top:1165px;width:176px;height:43px;border-radius:22px;background:#fff;box-shadow:0 1px 8px rgba(0,0,0,0.12)"></div>
<span class="t" style="left:1643px;top:1178px;width:176px;text-align:center;font-size:16px;color:#2b78c9;letter-spacing:0.38px">Template settings</span>
<!-- PROPS PANEL -->
<div style="left:1493px;top:194px;width:326px;height:458px;background:#fff;border-radius:5px;box-shadow:0 2px 10px rgba(0,0,0,0.18);overflow:hidden">
 <div style="left:0;top:0;width:326px;height:55px;background:linear-gradient(#f6a692,#f27c5d)"></div>
 <span class="t" style="left:0;top:19px;width:326px;text-align:center;font-size:17px;font-weight:bold;color:#fff">Logo</span>
 <div style="left:0;top:55px;width:326px;height:55px;background:#f2f2f2"></div>
 <div style="left:23px;top:67px;width:60px;height:30px;background:#fff;border:1px solid #cfcfcf"></div>
 <span class="t" style="left:23px;top:75px;width:60px;text-align:center;font-size:15px;color:#444">88</span>
 <span class="t" style="left:90px;top:75px;font-size:15px;color:#bbb">&#215;</span>
 <div style="left:108px;top:67px;width:60px;height:30px;background:#fff;border:1px solid #cfcfcf"></div>
 <span class="t" style="left:108px;top:75px;width:60px;text-align:center;font-size:15px;color:#444">58</span>
 <span class="t" style="left:177px;top:74px;font-size:17px;color:#444">px</span>
 <div style="left:279px;top:69px;width:25px;height:25px;border-radius:50%;border:1.5px solid #2b78c9"></div>
 <div style="left:285px;top:80px;width:3.5px;height:3.5px;border-radius:50%;background:#2b78c9"></div>
 <div style="left:290px;top:80px;width:3.5px;height:3.5px;border-radius:50%;background:#2b78c9"></div>
 <div style="left:295px;top:80px;width:3.5px;height:3.5px;border-radius:50%;background:#2b78c9"></div>
 <span style="left:23px;top:126px;width:300px;font-size:14px;line-height:21px;color:#6e6e6e;letter-spacing:0.5px">Add a logo and make your site look more professional.</span>
 <span class="t" style="left:23px;top:183px;font-size:14px;color:#505050;letter-spacing:0.35px;-webkit-text-stroke:0.45px #505050">Logo image</span>
 <div style="left:23px;top:212px;width:230px;height:39px;border:1px solid #c8c8c8"></div>
 <div style="left:31px;top:226px;width:162px;height:17px;border-radius:4px;background:#e2e2e2;filter:blur(4px)"></div>
 <svg style="left:197px;top:223px" width="17" height="17" viewBox="0 0 17 17"><circle cx="8.5" cy="8.5" r="7" fill="none" stroke="#333" stroke-width="1.3"/><path d="M6 6 L11 11 M11 6 L6 11" stroke="#333" stroke-width="1.3"/></svg>
 <div style="left:225px;top:229px;width:5px;height:5px;border-radius:50%;background:#222"></div>
 <div style="left:232px;top:229px;width:5px;height:5px;border-radius:50%;background:#222"></div>
 <div style="left:239px;top:229px;width:5px;height:5px;border-radius:50%;background:#222"></div>
 <div style="left:265px;top:212px;width:39px;height:39px;border:1.5px solid #4a80d0"></div>
 <svg style="left:276px;top:223px" width="17" height="17" viewBox="0 0 17 17"><path d="M2 15 L3 11 L11.5 2.5 L14.5 5.5 L6 14 Z" fill="#4a80d0"/></svg>
 <span style="left:23px;top:260px;width:300px;font-size:14px;line-height:21px;color:#6e6e6e;letter-spacing:0.5px">Get the best result by using a .png with transparent background.</span>
 <div style="left:0;top:321px;width:326px;height:1px;background:#d5d5d5"></div>
 <span class="t" style="left:23px;top:340px;font-size:16.5px;color:#333;letter-spacing:0.65px">Mobile view</span>
 <svg style="left:290px;top:339px" width="12" height="20" viewBox="0 0 12 20"><path d="M2 2 L10 10 L2 18" fill="none" stroke="#444" stroke-width="1.8"/></svg>
 <div style="left:0;top:377px;width:326px;height:1px;background:#d5d5d5"></div>
 <span class="t" style="left:23px;top:396px;font-size:16.5px;color:#333;letter-spacing:0.95px">Animation</span>
 <svg style="left:290px;top:395px" width="12" height="20" viewBox="0 0 12 20"><path d="M2 2 L10 10 L2 18" fill="none" stroke="#444" stroke-width="1.8"/></svg>
 <div style="left:0;top:434px;width:326px;height:1px;background:#d5d5d5"></div>
</div>
<!-- ARROWS -->
<svg style="left:0;top:0;pointer-events:none" width="1873" height="1245" viewBox="0 0 1873 1245">
<defs>
<filter id="sh" x="-30%" y="-30%" width="160%" height="160%"><feGaussianBlur in="SourceAlpha" stdDeviation="3"/><feOffset dx="2" dy="3"/><feComponentTransfer><feFuncA type="linear" slope="0.35"/></feComponentTransfer><feMerge><feMergeNode/><feMergeNode in="SourceGraphic"/></feMerge></filter>
<linearGradient id="ag1" gradientUnits="userSpaceOnUse" x1="705" y1="220" x2="886" y2="147"><stop offset="0" stop-color="#d40a22"/><stop offset="0.45" stop-color="#c93050"/><stop offset="1" stop-color="#e07088" stop-opacity="0.35"/></linearGradient>
<linearGradient id="ag2" gradientUnits="userSpaceOnUse" x1="114" y1="900" x2="201" y2="1036"><stop offset="0" stop-color="#d40a22"/><stop offset="0.45" stop-color="#c93050"/><stop offset="1" stop-color="#e07088" stop-opacity="0.35"/></linearGradient>
</defs>
<path d="M704.6 220.3 L719.7 192.8 L723.1 200.6 L886.2 147.4 L732 222.5 L734.3 229.2 Z" fill="url(#ag1)" filter="url(#sh)"/>
<path d="M113.6 899.9 L142.7 908.5 L137.2 914.2 L201.1 1036.5 L116.2 925.7 L109.3 930.1 Z" fill="url(#ag2)" filter="url(#sh)"/>
</svg>
</body></html>
